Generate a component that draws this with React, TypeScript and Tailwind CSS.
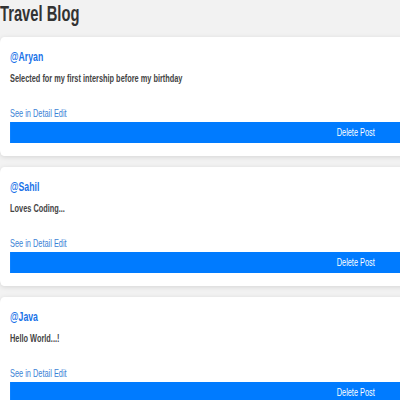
import React from 'react';

interface Post {
  id: number;
  username: string;
  content: string;
}

const posts: Post[] = [
  { id: 1, username: 'Aryan', content: 'Selected for my first intership before my birthday' },
  { id: 2, username: 'Sahil', content: 'Loves Coding...' },
  { id: 3, username: 'Java', content: 'Hello World...!' },
];

const App = () => {
  return (
    <div className="w-[400px] h-[400px] overflow-hidden bg-[#f2f2f2]">
      {/* the reference is squeezed sideways, so the page is laid out wide and scaled */}
      <div className="w-[1100px] origin-top-left scale-x-[0.67] font-['Liberation_Sans',Arial,sans-serif]">
        <h1 className="pt-[1px] text-[22px] leading-[25px] font-bold text-[#333]">Travel Blog</h1>
        <div className="mt-[11px] w-[1062px]">
          {posts.map((post) => (
            <div key={post.id} className="mb-[11px] rounded-md bg-white px-[15px] pt-[12px] pb-[13px] shadow-[0_1px_6px_rgba(0,0,0,0.12)]">
              <h3 className="text-[13px] leading-[15px] font-bold text-[#1a73e8]">@{post.username}</h3>
              <p className="mt-[8px] text-[11px] leading-[13px] font-bold text-[#444]">{post.content}</p>
              <div className="mt-[22px] text-[11px] leading-[13px] text-[#3b82d6]">
                <a href="#">See in Detail</a> <a href="#">Edit</a>
              </div>
              <button className="mt-[2px] block h-[21px] w-full bg-[#007bff] text-[11px] text-white">
                Delete Post
              </button>
            </div>
          ))}
        </div>
      </div>
    </div>
  );
};

export default App;
